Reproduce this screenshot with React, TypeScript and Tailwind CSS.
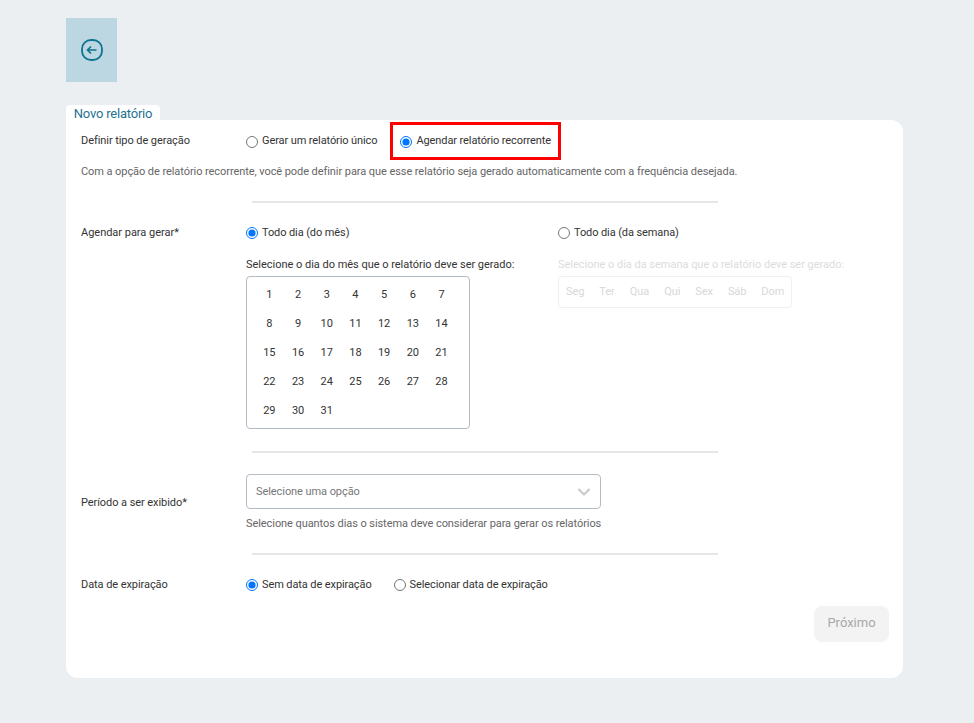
import { ChevronDown } from 'lucide-react';

const days = Array.from({ length: 31 }, (_, i) => i + 1);
const weekDays = ['Seg', 'Ter', 'Qua', 'Qui', 'Sex', 'Sáb', 'Dom'];

function Radio({ label, checked, name }: { label: string; checked?: boolean; name: string }) {
  return (
    <label className="flex items-center gap-[4px] whitespace-nowrap text-[11px] tracking-[-0.1px] text-[#333]">
      <input type="radio" name={name} defaultChecked={checked} className="m-0 h-[12px] w-[12px]" />
      {label}
    </label>
  );
}

function Divider({ className }: { className: string }) {
  return <div className={`ml-[171px] h-[2px] w-[466px] bg-[#e6e6e6] ${className}`} />;
}

export default function App() {
  return (
    <div className="min-h-[723px] bg-[#ebeff2] px-[66px] pt-[18px] font-['Roboto',sans-serif]">
      <button className="flex h-[64px] w-[51px] items-center justify-center bg-[#bdd7e2]">
        <svg width="22" height="22" viewBox="0 0 22 22" fill="none" stroke="#0e7490" strokeWidth="1.8">
          <rect x="1" y="1" width="20" height="20" rx="9" />
          <path d="M15.5 11H6.5M10 7.5 6.5 11l3.5 3.5" strokeWidth="1.7" />
        </svg>
      </button>

      <div className="mt-[23px] flex h-[15px] w-[94px] items-center justify-center rounded-t-[4px] bg-white pt-[1px] text-[13px] leading-none tracking-[-0.2px] text-[#1f7391]">
        Novo relatório
      </div>

      <div className="h-[558px] w-[837px] rounded-b-[12px] rounded-tr-[12px] bg-white px-[15px] pt-[1px]">
        <div className="flex h-[40px] items-center pt-[1px]">
          <span className="w-[165px] text-[11px] tracking-[-0.07px] text-[#333]">Definir tipo de geração</span>
          <Radio name="tipo" label="Gerar um relatório único" />
          <div className="ml-[13px] flex h-[38px] w-[171px] items-center self-start border-[3px] border-[#ff0000] pl-[7px] pt-[1px]">
            <Radio name="tipo" label="Agendar relatório recorrente" checked />
          </div>
        </div>

        <p className="mt-[1px] text-[11px] leading-[20px] tracking-[-0.07px] text-[#666]">
          Com a opção de relatório recorrente, você pode definir para que esse relatório seja gerado automaticamente com a frequência desejada.
        </p>

        <Divider className="mt-[19px]" />

        <div className="mt-[21px] flex">
          <span className="w-[165px] pt-[1px] text-[11px] leading-[16px] tracking-[-0.02px] text-[#333]">Agendar para gerar*</span>
          <div className="w-[312px]">
            <div className="h-[16px] pt-[1px]">
              <Radio name="agenda" label="Todo dia (do mês)" checked />
            </div>
            <p className="mt-[17px] text-[11px] leading-[16px] tracking-[-0.02px] text-[#333]">
              Selecione o dia do mês que o relatório deve ser gerado:
            </p>
            <div className="mt-[3px] grid h-[153px] w-[224px] grid-cols-[repeat(7,28.7px)] auto-rows-[29px] rounded-[4px] border border-[#b4bcc4] px-[8px] py-[4px]">
              {days.map((d) => (
                <span key={d} className="flex items-center justify-center text-[11px] tracking-[-0.07px] text-[#333]">
                  {d}
                </span>
              ))}
            </div>
          </div>
          <div>
            <div className="h-[16px] pt-[1px]">
              <Radio name="agenda" label="Todo dia (da semana)" />
            </div>
            <p className="mt-[17px] text-[11px] leading-[16px] tracking-[-0.02px] text-[#dcdcdc]">
              Selecione o dia da semana que o relatório deve ser gerado:
            </p>
            <div className="mt-[3px] flex h-[32px] w-[234px] items-center gap-[15px] rounded-[4px] border border-[#f0f0f0] pl-[7px] text-[11px] tracking-[-0.07px] text-[#d8d8d8]">
              {weekDays.map((w) => (
                <span key={w}>{w}</span>
              ))}
            </div>
          </div>
        </div>

        <Divider className="mt-[22px]" />

        <div className="mt-[21px] flex">
          <span className="flex h-[37px] w-[165px] items-end text-[11px] leading-[16px] tracking-[-0.07px] text-[#333]">Período a ser exibido*</span>
          <div>
            <div className="flex h-[35px] w-[355px] items-center justify-between rounded-[4px] border border-[#b4bcc4] pl-[9px] pr-[6px] text-[11px] tracking-[-0.07px] text-[#777]">
              <span className="pt-[2px]">Selecione uma opção</span>
              <ChevronDown size={20} color="#c8c8c8" strokeWidth={2.5} />
            </div>
            <p className="mt-[7px] text-[11px] leading-[16px] tracking-[-0.07px] text-[#666]">
              Selecione quantos dias o sistema deve considerar para gerar os relatórios
            </p>
          </div>
        </div>

        <Divider className="mt-[21px]" />

        <div className="mt-[22px] flex items-center">
          <span className="w-[165px] text-[11px] leading-[16px] tracking-[-0.07px] text-[#333]">Data de expiração</span>
          <div className="flex gap-[22px]">
            <Radio name="expira" label="Sem data de expiração" checked />
            <Radio name="expira" label="Selecionar data de expiração" />
          </div>
        </div>

        <div className="mt-[12px] flex justify-end">
          <button className="mr-[-1px] h-[36px] w-[75px] rounded-[8px] bg-[#f3f3f3] pb-[2px] text-[13px] text-[#a8a8a8]">Próximo</button>
        </div>
      </div>
    </div>
  );
}
